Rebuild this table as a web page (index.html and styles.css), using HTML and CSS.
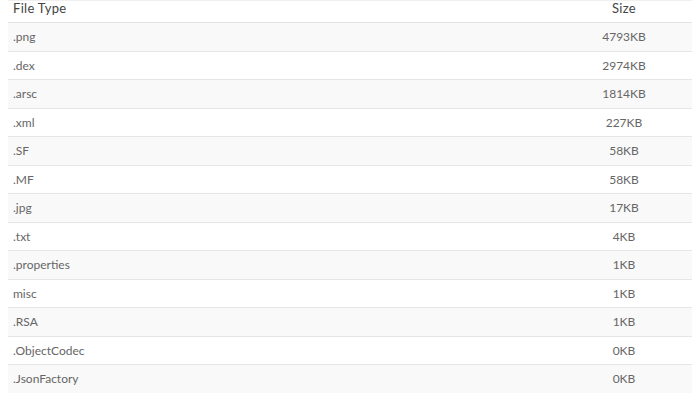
FILE: index.html
```html
<!DOCTYPE html>
<html>
<head>
<meta charset="utf-8">
<link rel="stylesheet" href="styles.css">
</head>
<body>
<table class="files">
  <thead>
    <tr><th class="type">File Type</th><th class="size">Size</th></tr>
  </thead>
  <tbody>
    <tr><td class="type">.png</td><td class="size">4793KB</td></tr>
    <tr><td class="type">.dex</td><td class="size">2974KB</td></tr>
    <tr><td class="type">.arsc</td><td class="size">1814KB</td></tr>
    <tr><td class="type">.xml</td><td class="size">227KB</td></tr>
    <tr><td class="type">.SF</td><td class="size">58KB</td></tr>
    <tr><td class="type">.MF</td><td class="size">58KB</td></tr>
    <tr><td class="type">.jpg</td><td class="size">17KB</td></tr>
    <tr><td class="type">.txt</td><td class="size">4KB</td></tr>
    <tr><td class="type">.properties</td><td class="size">1KB</td></tr>
    <tr><td class="type">misc</td><td class="size">1KB</td></tr>
    <tr><td class="type">.RSA</td><td class="size">1KB</td></tr>
    <tr><td class="type">.ObjectCodec</td><td class="size">0KB</td></tr>
    <tr><td class="type">.JsonFactory</td><td class="size">0KB</td></tr>
  </tbody>
</table>
</body>
</html>
```
FILE: styles.css
```css
html, body {
  margin: 0;
  padding: 0;
  background: #ffffff;
}
body {
  padding: 0 8px;
  font-family: Lato, "Open Sans", sans-serif;
}
.files {
  width: 684px;
  border-collapse: collapse;
  border-top: 1px solid #f0f0f0;
}
.files th {
  height: 21px;
  padding: 0 5px;
  font-size: 13px;
  font-weight: normal;
  color: #444444;
  letter-spacing: 0.3px;
  vertical-align: top;
  line-height: 14px;
  border-bottom: 1px solid #e4e4e4;
}
.files td {
  height: 27.5px;
  padding: 0 5px;
  font-size: 12px;
  color: #666666;
  border-top: 1px solid #e6e6e6;
  vertical-align: middle;
}
.files tbody tr:nth-child(odd) td {
  background: #f9f9f9;
}
.files .type {
  text-align: left;
}
.files .size {
  text-align: center;
  width: 126px;
}
```
